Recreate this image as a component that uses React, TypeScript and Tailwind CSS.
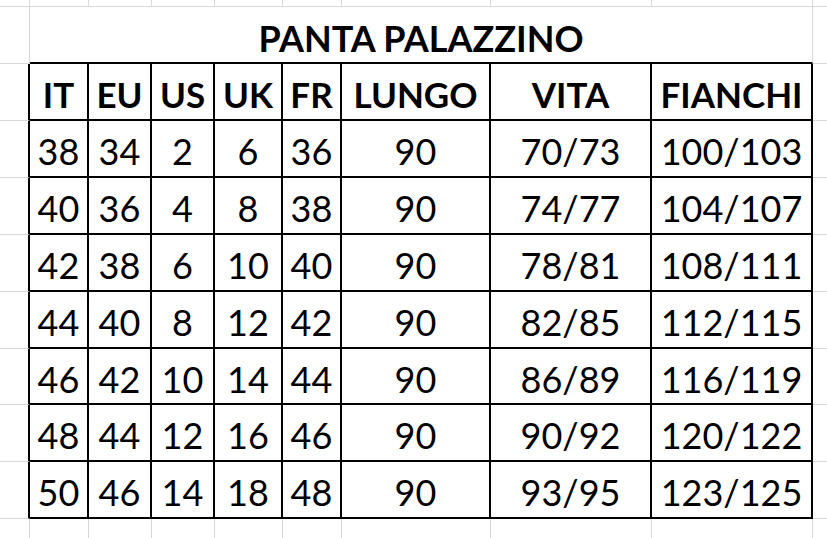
import React from 'react';

const rows: string[][] = [
    ['38', '34', '2', '6', '36', '90', '70/73', '100/103'],
    ['40', '36', '4', '8', '38', '90', '74/77', '104/107'],
    ['42', '38', '6', '10', '40', '90', '78/81', '108/111'],
    ['44', '40', '8', '12', '42', '90', '82/85', '112/115'],
    ['46', '42', '10', '14', '44', '90', '86/89', '116/119'],
    ['48', '44', '12', '16', '46', '90', '90/92', '120/122'],
    ['50', '46', '14', '18', '48', '90', '93/95', '123/125'],
];

const headers = ['IT', 'EU', 'US', 'UK', 'FR', 'LUNGO', 'VITA', 'FIANCHI'];

function GreyCell({ last = false, edge = false }: { last?: boolean; edge?: boolean }) {
    if (last) return <div className="border-r border-[#d9d9d9]" />;
    if (edge) return <div className="border-b border-[#d9d9d9]" />;
    return <div className="border-r border-b border-[#d9d9d9]" />;
}

export default function App() {
    return (
        <div
            className="w-[827px] h-[538px] bg-white overflow-hidden text-black"
            style={{ fontFamily: 'Lato, "Open Sans", sans-serif' }}
        >
            <div className="grid grid-cols-[30px_59px_63px_63px_68px_59px_149px_161px_161px_14px] grid-rows-[7px_57px_57px_57px_57px_57px_57px_56px_57px_57px_19px]">
                {/* top strip */}
                {Array.from({ length: 9 }).map((_, i) => (
                    <GreyCell key={`t${i}`} />
                ))}
                <GreyCell edge />

                {/* title row (merged cell) */}
                <div className="border-r border-b border-[#d9d9d9]" />
                <div className="col-span-8 border-b-2 border-b-black border-r border-r-[#d9d9d9] flex items-center justify-center pt-[6px]">
                    <span className="text-[36px] font-bold leading-none">PANTA PALAZZINO</span>
                </div>
                <GreyCell edge />

                {/* header row */}
                <div className="border-b border-b-[#d9d9d9] border-r-2 border-r-black" />
                {headers.map(h => (
                    <div key={h} className="border-r-2 border-b-2 border-black flex items-center justify-center pt-[6px]">
                        <span className="text-[35px] font-bold leading-none">{h}</span>
                    </div>
                ))}
                <GreyCell edge />

                {rows.map((r, ri) => (
                    <React.Fragment key={ri}>
                        <div className="border-b border-b-[#d9d9d9] border-r-2 border-r-black" />
                        {r.map((v, ci) => (
                            <div key={ci} className="border-r-2 border-b-2 border-black flex items-center justify-center pt-[5px]">
                                <span className="text-[36px] leading-none">{v}</span>
                            </div>
                        ))}
                        <GreyCell edge />
                    </React.Fragment>
                ))}

                {/* bottom strip */}
                {Array.from({ length: 9 }).map((_, i) => (
                    <GreyCell key={`b${i}`} last />
                ))}
                <div />
            </div>
        </div>
    );
}
